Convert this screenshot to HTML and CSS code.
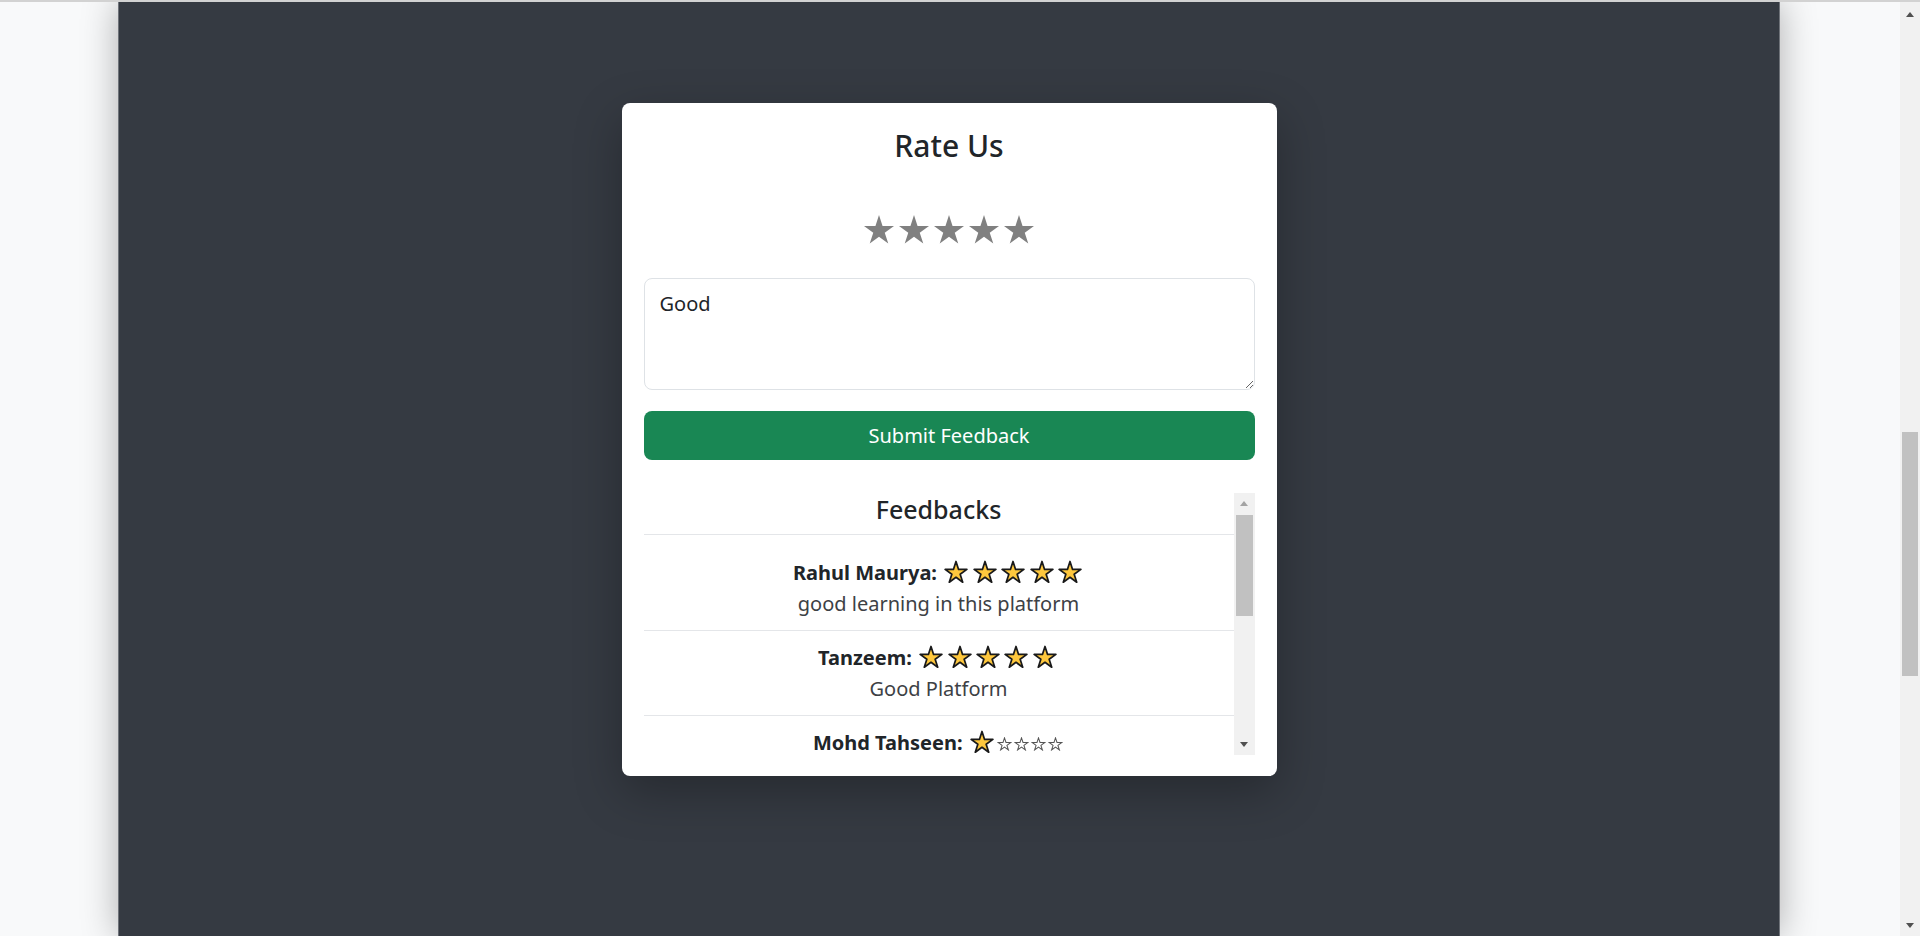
FILE: index.html
```html
<!DOCTYPE html>
<html lang="en">
<head>
<meta charset="utf-8">
<title>Rate Us</title>
<link rel="stylesheet" href="styles.css">
</head>
<body>
<svg class="defs" aria-hidden="true">
  <symbol id="star-shape" viewBox="0 0 29 28">
    <polygon points="14.5,0 17.93,10.53 29,10.54 20.04,17.05 23.46,27.59 14.5,21.08 5.54,27.59 8.96,17.05 0,10.54 11.07,10.53"/>
  </symbol>
  <symbol id="emoji-star" viewBox="-2 -2 33 32">
    <polygon points="14.5,0 17.93,10.53 29,10.54 20.04,17.05 23.46,27.59 14.5,21.08 5.54,27.59 8.96,17.05 0,10.54 11.07,10.53" fill="#ffc83d" stroke="#1a1a1a" stroke-width="2.3" stroke-linejoin="round"/>
  </symbol>
  <symbol id="hollow-star" viewBox="-2 -2 33 32">
    <polygon points="14.5,0 17.93,10.53 29,10.54 20.04,17.05 23.46,27.59 14.5,21.08 5.54,27.59 8.96,17.05 0,10.54 11.07,10.53" fill="#ffffff" stroke="#555555" stroke-width="2.3" stroke-linejoin="miter"/>
  </symbol>
</svg>
<div class="viewport">
  <main class="page">
    <section class="panel">
      <div class="card">
        <h2 class="card-title">Rate Us</h2>
        <div class="rating">
          <svg class="rate-star"><use href="#star-shape"/></svg>
          <svg class="rate-star"><use href="#star-shape"/></svg>
          <svg class="rate-star"><use href="#star-shape"/></svg>
          <svg class="rate-star"><use href="#star-shape"/></svg>
          <svg class="rate-star"><use href="#star-shape"/></svg>
        </div>
        <textarea class="comment">Good</textarea>
        <button class="submit" type="button">Submit Feedback</button>
        <div class="feedbacks">
          <div class="feedbacks-body">
            <h5 class="feedbacks-title">Feedbacks</h5>
            <ul class="feedback-list">
              <li class="feedback-item">
                <div class="feedback-head"><strong>Rahul Maurya:</strong> <svg class="emoji-star"><use href="#emoji-star"/></svg><svg class="emoji-star"><use href="#emoji-star"/></svg><svg class="emoji-star"><use href="#emoji-star"/></svg><svg class="emoji-star"><use href="#emoji-star"/></svg><svg class="emoji-star"><use href="#emoji-star"/></svg></div>
                <div class="feedback-text">good learning in this platform</div>
              </li>
              <li class="feedback-item">
                <div class="feedback-head"><strong>Tanzeem:</strong> <svg class="emoji-star"><use href="#emoji-star"/></svg><svg class="emoji-star"><use href="#emoji-star"/></svg><svg class="emoji-star"><use href="#emoji-star"/></svg><svg class="emoji-star"><use href="#emoji-star"/></svg><svg class="emoji-star"><use href="#emoji-star"/></svg></div>
                <div class="feedback-text">Good Platform</div>
              </li>
              <li class="feedback-item">
                <div class="feedback-head"><strong>Mohd Tahseen:</strong> <svg class="emoji-star"><use href="#emoji-star"/></svg><svg class="hollow-star"><use href="#hollow-star"/></svg><svg class="hollow-star"><use href="#hollow-star"/></svg><svg class="hollow-star"><use href="#hollow-star"/></svg><svg class="hollow-star"><use href="#hollow-star"/></svg></div>
              </li>
            </ul>
          </div>
          <div class="vscroll inner-scroll">
            <div class="sb-btn"><span class="arrow-up faded"></span></div>
            <div class="thumb inner-thumb"></div>
            <div class="sb-space"></div>
            <div class="sb-btn"><span class="arrow-down"></span></div>
          </div>
        </div>
      </div>
    </section>
  </main>
  <div class="vscroll page-scroll">
    <div class="sb-btn page-up"><span class="arrow-up"></span></div>
    <div class="thumb page-thumb"></div>
    <div class="sb-space"></div>
    <div class="sb-btn page-down"><span class="arrow-down"></span></div>
  </div>
</div>
</body>
</html>
```
FILE: styles.css
```css
html, body {
  margin: 0;
  padding: 0;
}

body {
  height: 936px;
  box-sizing: border-box;
  border-top: 2px solid #d2d2d2;
  overflow: hidden;
  font-family: "Noto Sans", "Open Sans", sans-serif;
  color: #212529;
  background: #f8f9fa;
}

.defs {
  display: block;
  width: 0;
  height: 0;
  overflow: hidden;
}

.viewport {
  display: flex;
  height: 934px;
}

.page {
  flex: 1;
  display: flex;
  justify-content: center;
  padding-right: 2px;
  background: #f8f9fa;
  overflow: hidden;
}

.panel {
  width: 1662px;
  flex-shrink: 0;
  box-sizing: border-box;
  background: #353a42;
  border-left: 1px solid #6f737a;
  border-right: 1px solid #6f737a;
  box-shadow: 0 0 34px rgba(0, 0, 0, 0.3);
  display: flex;
  justify-content: center;
  align-items: flex-start;
  padding-top: 101px;
}

.card {
  width: 655px;
  box-sizing: border-box;
  background: #ffffff;
  border-radius: 8px;
  padding: 22px 22px 21px;
  box-shadow: 0 16px 48px rgba(0, 0, 0, 0.28);
  display: flex;
  flex-direction: column;
}

.card-title {
  margin: 0;
  font-size: 30px;
  font-weight: 500;
  line-height: 42px;
  text-align: center;
  color: #212529;
}

.rating {
  margin-top: 42px;
  height: 40px;
  display: flex;
  justify-content: center;
  align-items: center;
  gap: 5px;
}

.rate-star {
  width: 30px;
  height: 29px;
  fill: #808080;
}

.comment {
  margin: 29px 0 0;
  width: 100%;
  height: 112px;
  box-sizing: border-box;
  border: 1px solid #dee2e6;
  border-radius: 8px;
  padding: 10px 15px;
  font-family: "Noto Sans", "Open Sans", sans-serif;
  font-size: 20px;
  line-height: 30px;
  color: #212529;
  resize: vertical;
  outline: none;
}

.submit {
  margin-top: 21px;
  height: 49px;
  border: 0;
  border-radius: 8px;
  background: #198754;
  color: #ffffff;
  font-family: "Noto Sans", "Open Sans", sans-serif;
  font-size: 20px;
  padding: 0;
}

.feedbacks {
  margin-top: 33px;
  height: 262px;
  display: flex;
}

.feedbacks-body {
  flex: 1;
  overflow: hidden;
  text-align: center;
}

.feedbacks-title {
  margin: 0;
  font-size: 25px;
  font-weight: 500;
  line-height: 32px;
  padding-bottom: 9px;
  border-bottom: 1px solid #e4e6e9;
}

.feedback-list {
  list-style: none;
  margin: 0;
  padding: 0;
}

.feedback-item {
  padding: 11px 20px;
  border-bottom: 1px solid #e4e6e9;
}

.feedback-item:first-child {
  padding-top: 22px;
}

.feedback-head {
  font-size: 20px;
  line-height: 32px;
  color: #212529;
}

.feedback-head strong {
  font-weight: 700;
}

.feedback-text {
  font-size: 20px;
  line-height: 30px;
  color: #3d4145;
}

.emoji-star {
  width: 26px;
  height: 24px;
  vertical-align: -4px;
  margin: 0 1.2px;
}

.hollow-star {
  width: 15px;
  height: 14px;
  vertical-align: -1px;
  margin: 0 1px;
}

.vscroll {
  background: #f1f1f1;
  display: flex;
  flex-direction: column;
  flex-shrink: 0;
}

.inner-scroll {
  width: 21px;
}

.page-scroll {
  width: 20px;
}

.sb-btn {
  height: 21px;
  display: flex;
  align-items: center;
  justify-content: center;
  flex-shrink: 0;
}

.page-up {
  height: 24px;
}

.page-down {
  height: 22px;
}

.sb-space {
  flex: 1;
}

.arrow-up {
  width: 0;
  height: 0;
  border-left: 4.5px solid transparent;
  border-right: 4.5px solid transparent;
  border-bottom: 5px solid #505050;
}

.arrow-up.faded {
  border-bottom-color: #a3a3a3;
}

.arrow-down {
  width: 0;
  height: 0;
  border-left: 4.5px solid transparent;
  border-right: 4.5px solid transparent;
  border-top: 5px solid #505050;
}

.thumb {
  background: #c1c1c1;
  flex-shrink: 0;
}

.inner-thumb {
  margin: 1px 2px 0;
  height: 101px;
}

.page-thumb {
  margin: 406px 2px 0;
  height: 244px;
}
```
